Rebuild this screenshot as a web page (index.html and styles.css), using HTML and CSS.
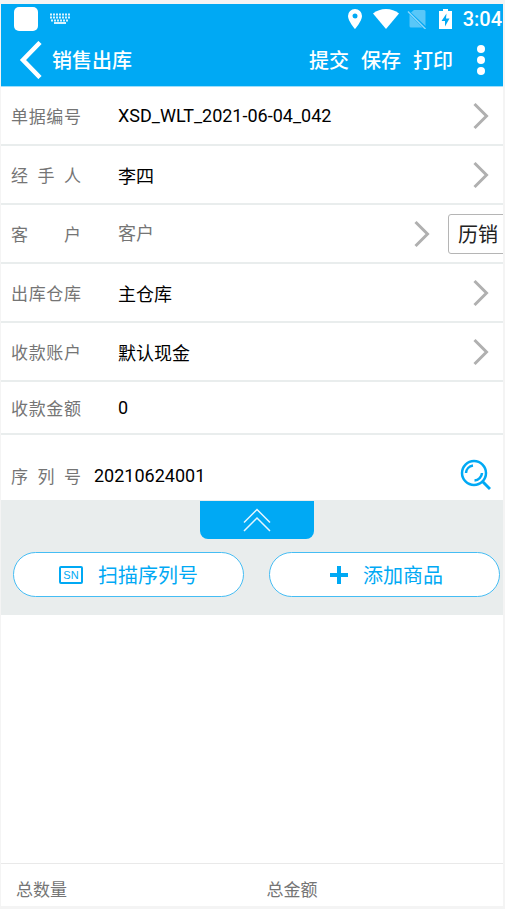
FILE: index.html
```html
<!DOCTYPE html>
<html lang="zh-CN">
<head>
<meta charset="utf-8">
<meta name="viewport" content="width=device-width, initial-scale=1">
<title>销售出库</title>
<link rel="stylesheet" href="styles.css">
</head>
<body>
<svg width="0" height="0" class="defs" aria-hidden="true">
  <symbol id="chevron" viewBox="0 0 16 28"><path d="M1.5 2L13.5 14L1.5 26" fill="none" stroke="#b0b0b0" stroke-width="3"/></symbol>
</svg>
<div class="screen">
  <header class="top">
    <div class="status">
      <span class="app-square"></span>
      <svg class="keyboard" width="20" height="12" viewBox="0 0 20 12" fill="none" stroke="#fff" stroke-opacity=".85">
        <path d="M0 1.5H20M0 4.5H20M1 7.5H19" stroke-width="2" stroke-dasharray="2 1"/><path d="M4 10H16" stroke-width="2"/>
      </svg>
      <span class="spacer"></span>
      <svg class="pin" width="14" height="20" viewBox="0 0 14 20"><path fill="#fff" fill-rule="evenodd" d="M7 0a7 7 0 0 0-7 7c0 5 7 13 7 13s7-8 7-13a7 7 0 0 0-7-7zm0 4.500a2.500 2.500 0 1 1 0 5a2.500 2.500 0 0 1 0-5z"/></svg>
      <svg class="wifi" width="26" height="20" viewBox="0 0 26 20"><path fill="#fff" d="M0 4.500C7-1.500 19-1.500 26 4.500L13 20z"/></svg>
      <svg class="sim" width="20" height="20" viewBox="0 0 20 20"><path d="M7 1h10q1.500 0 1.500 1.500V17L4 3.500zM2.500 5.500L15.500 18.500H4q-1.500 0-1.500-1.500z" fill="#fff" fill-opacity=".35"/><path d="M1 2.500L18.500 20" stroke="#8bd6fb" stroke-width="1.500"/></svg>
      <svg class="battery" width="13" height="20" viewBox="0 0 13 20"><path d="M4 0h5v2h4v18H0V2h4z" fill="#fff"/><path d="M7.500 4.500L2.500 12H6v5.500L10.500 9.500H7z" fill="#00a9f4"/></svg>
      <span class="time">3:04</span>
    </div>
    <div class="bar">
      <button class="back" aria-label="返回"><svg width="23" height="38" viewBox="0 0 23 38"><path d="M21 1.500L4 19L21 36.500" fill="none" stroke="#fff" stroke-width="4.500"/></svg></button>
      <h1>销售出库</h1>
      <nav class="actions">
        <button>提交</button><button>保存</button><button>打印</button>
        <button class="more" aria-label="更多"><svg width="8" height="30" viewBox="0 0 8 30" fill="#fff"><circle cx="4" cy="4" r="4"/><circle cx="4" cy="15" r="4"/><circle cx="4" cy="26" r="4"/></svg></button>
      </nav>
    </div>
  </header>

  <main>
    <button class="row"><span class="label">单据编号</span><span class="value">XSD_WLT_2021-06-04_042</span><svg class="chevron"><use href="#chevron"/></svg></button>
    <button class="row"><span class="label">经 手 人</span><span class="value">李四</span><svg class="chevron"><use href="#chevron"/></svg></button>
    <div class="row customer">
      <label class="label" for="customer">客 户</label><input class="value" id="customer" placeholder="客户"><svg class="chevron"><use href="#chevron"/></svg>
      <button class="history">历销</button>
    </div>
    <button class="row"><span class="label">出库仓库</span><span class="value">主仓库</span><svg class="chevron"><use href="#chevron"/></svg></button>
    <button class="row"><span class="label">收款账户</span><span class="value">默认现金</span><svg class="chevron"><use href="#chevron"/></svg></button>
    <div class="row amount"><label class="label" for="amount">收款金额</label><input class="value" id="amount" value="0"></div>
    <div class="row serial">
      <label class="label" for="serial">序 列 号</label><input class="value" id="serial" value="20210624001">
      <button class="search" aria-label="搜索"><svg width="32" height="32" viewBox="0 0 32 32" fill="none" stroke="#00a9f4"><circle cx="15" cy="14" r="12" stroke-width="2.500"/><path d="M7 14a8 8 0 0 1 7-7.500M23 14a8 8 0 0 1-7.500 7.500" stroke-width="2.500"/><path d="M23.500 22.500L31 30" stroke-width="3"/></svg></button>
    </div>
    <section class="tools">
      <button class="collapse" aria-label="收起"><svg width="28" height="24" viewBox="0 0 28 24" fill="none" stroke="#e4f6ff" stroke-width="1.500"><path d="M1 14.500L14 1.500L27 14.500M1 23L14 10L27 23"/></svg></button>
      <div class="pair">
        <button class="pill"><svg width="24" height="18" viewBox="0 0 24 18"><rect x="1" y="1" width="22" height="16" rx="1" fill="none" stroke="#00a9f4" stroke-width="2"/><text class="sn" x="12" y="13" text-anchor="middle">SN</text></svg><span>扫描序列号</span></button>
        <button class="pill add"><svg width="18" height="18" viewBox="0 0 18 18"><path d="M9 0V18M0 9H18" stroke="#00a9f4" stroke-width="4"/></svg><span>添加商品</span></button>
      </div>
    </section>
  </main>
  <footer class="totals"><span>总数量</span><span>总金额</span></footer>
</div>
</body>
</html>
```
FILE: styles.css
```css
* { box-sizing: border-box; }
body {
  margin: 0;
  padding: 4px 2px 3px 1px;
  min-height: 100vh;
  display: flex;
  background: #f4f4f4;
  font-family: Roboto, "Noto Sans CJK SC", sans-serif;
  font-size: 17px;
  color: #000;
}
button, input { font: inherit; color: inherit; background: none; border: 0; padding: 0; margin: 0; }
button { cursor: pointer; }
svg { display: block; flex: none; }
.defs { position: absolute; }
.screen { flex: 1; min-width: 0; display: flex; flex-direction: column; background: #fff; overflow: hidden; }

.top { background: #00a9f4; color: #fff; border-bottom: 1px solid #9fdffb; }
.status { display: flex; align-items: center; height: 29px; padding: 0 1px 0 13px; }
.app-square { width: 24px; height: 24px; border-radius: 5px; background: #fff; }
.keyboard { margin-left: 12px; }
.spacer { flex: 1; }
.wifi { margin-left: 11px; }
.sim { margin-left: 8px; }
.battery { margin-left: 12px; }
.time { margin-left: 11px; font-size: 20px; font-weight: 500; }
.bar { display: flex; align-items: center; height: 53px; padding: 0 18px; }
.bar h1 { margin: 0 0 0 10px; font-size: 20px; font-weight: 500; }
.actions { display: flex; align-items: center; gap: 12px; margin-left: auto; font-size: 20px; font-weight: 500; }
.more { margin-left: 12px; }

.row {
  display: flex;
  align-items: center;
  width: 100%;
  height: 59px;
  padding: 0 14px 0 10px;
  border-bottom: 2px solid #e9eded;
  text-align: left;
}
.label { width: 70px; flex: none; color: #757575; text-align-last: justify; }
.value { flex: 1; min-width: 0; margin-left: 37px; outline: 0; font-size: 18px; }
.value::placeholder { color: #757575; opacity: 1; }
.chevron { width: 16px; height: 28px; }
.customer { padding-right: 0; }
.history {
  flex: none;
  width: 63px;
  height: 40px;
  margin: 0 -8px 0 18px;
  padding-left: 9px;
  border: 1px solid #b5b5b5;
  border-radius: 3px;
  font-size: 20px;
  text-align: left;
  color: #222;
}
.amount { height: 53px; }
.serial { height: 65px; padding-top: 15px; padding-right: 12px; border-bottom: 0; }
.serial .value { margin-left: 13px; }

.tools { display: flex; flex-direction: column; align-items: center; background: #e9eded; padding: 1px 3px 18px 12px; }
.collapse { display: flex; align-items: center; justify-content: center; width: 114px; height: 38px; border-radius: 0 0 8px 8px; background: #00a9f4; }
.pair { display: grid; grid-template-columns: 1fr 1fr; gap: 25px; width: 100%; margin-top: 13px; }
.pill {
  display: flex;
  align-items: center;
  justify-content: center;
  gap: 15px;
  height: 45px;
  border: 1px solid #45bdf4;
  border-radius: 23px;
  background: #fff;
  color: #00a9f4;
  font-size: 20px;
}
.add { padding-left: 4px; }
.sn { font: 11px "Liberation Sans", sans-serif; fill: #00a9f4; }

.totals { display: grid; grid-template-columns: 1fr 1fr; column-gap: 14px; align-items: center; height: 43px; margin-top: auto; padding: 6px 0 0 15px; border-top: 1px solid #e9e9e9; color: #757575; }
```
